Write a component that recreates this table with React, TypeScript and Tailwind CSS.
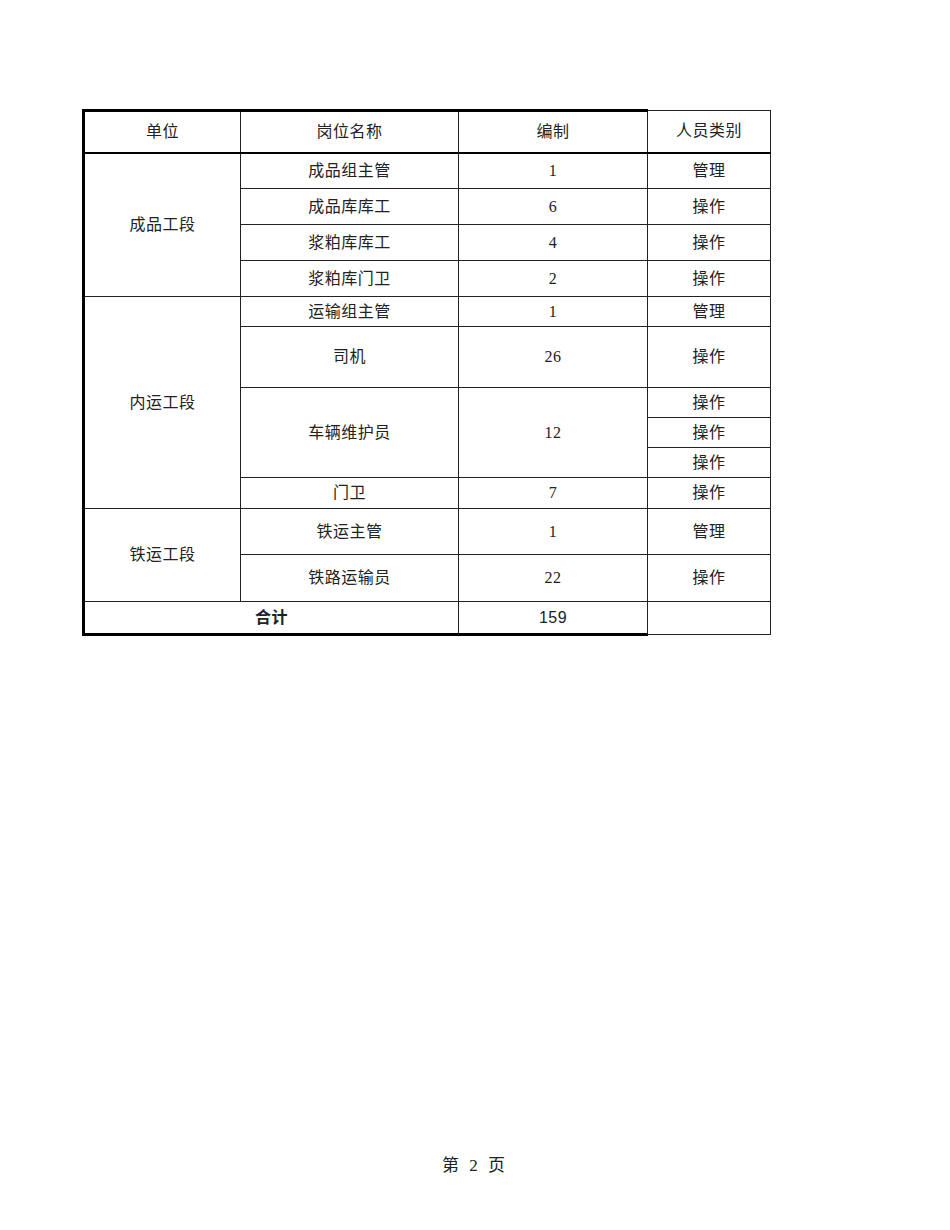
const serif = "font-['Liberation_Serif','Noto_Sans_CJK_SC',serif]"

type Row = {
  h: string
  unit?: { text: string; span: number }
  post?: { text: string; span?: number }
  count?: { text: string; span?: number }
  kind: string
}

const rows: Row[] = [
  { h: 'h-[36px]', unit: { text: '成品工段', span: 4 }, post: { text: '成品组主管' }, count: { text: '1' }, kind: '管理' },
  { h: 'h-[36px]', post: { text: '成品库库工' }, count: { text: '6' }, kind: '操作' },
  { h: 'h-[36px]', post: { text: '浆粕库库工' }, count: { text: '4' }, kind: '操作' },
  { h: 'h-[36px]', post: { text: '浆粕库门卫' }, count: { text: '2' }, kind: '操作' },
  { h: 'h-[30px]', unit: { text: '内运工段', span: 6 }, post: { text: '运输组主管' }, count: { text: '1' }, kind: '管理' },
  { h: 'h-[61px]', post: { text: '司机' }, count: { text: '26' }, kind: '操作' },
  { h: 'h-[30px]', post: { text: '车辆维护员', span: 3 }, count: { text: '12', span: 3 }, kind: '操作' },
  { h: 'h-[30px]', kind: '操作' },
  { h: 'h-[30px]', kind: '操作' },
  { h: 'h-[31px]', post: { text: '门卫' }, count: { text: '7' }, kind: '操作' },
  { h: 'h-[46px]', unit: { text: '铁运工段', span: 2 }, post: { text: '铁运主管' }, count: { text: '1' }, kind: '管理' },
  { h: 'h-[47px]', post: { text: '铁路运输员' }, count: { text: '22' }, kind: '操作' },
]

const cell = 'border border-[#222] text-center align-middle p-0'

export default function App() {
  return (
    <div className={`w-[950px] h-[1230px] bg-white flex flex-col text-[16px] text-[#222] ${serif}`}>
      <div className="pl-[82px] pt-[109px]">
        <table className="border-collapse table-fixed w-[687px] tracking-[0.5px]">
          <colgroup>
            <col className="w-[157px]" />
            <col className="w-[218px]" />
            <col className="w-[189px]" />
            <col className="w-[123px]" />
          </colgroup>
          <tbody>
            <tr className="h-[42px]">
              <td className={`${cell} border-l-[3px] border-t-[3px] border-b-2 border-l-black border-t-black border-b-black`}>单位</td>
              <td className={`${cell} border-t-[3px] border-b-2 border-t-black border-b-black`}>岗位名称</td>
              <td className={`${cell} border-t-[3px] border-b-2 border-t-black border-b-black`}>编制</td>
              <td className={`${cell} border-b-2 border-b-black`}>人员类别</td>
            </tr>
            {rows.map((r, i) => (
              <tr key={i} className={r.h}>
                {r.unit && (
                  <td rowSpan={r.unit.span} className={`${cell} border-l-[3px] border-l-black`}>
                    {r.unit.text}
                  </td>
                )}
                {r.post && (
                  <td rowSpan={r.post.span} className={cell}>
                    {r.post.text}
                  </td>
                )}
                {r.count && (
                  <td rowSpan={r.count.span} className={cell}>
                    {r.count.text}
                  </td>
                )}
                <td className={cell}>{r.kind}</td>
              </tr>
            ))}
            <tr className="h-[33px] font-['Liberation_Sans','Noto_Sans_CJK_SC',sans-serif]">
              <td colSpan={2} className={`${cell} border-l-[3px] border-b-[3px] border-l-black border-b-black font-bold`}>
                合计
              </td>
              <td className={`${cell} border-b-[3px] border-b-black`}>159</td>
              <td className={cell}></td>
            </tr>
          </tbody>
        </table>
      </div>

      <div className="flex-1" />

      <footer className="pb-[52px] text-center text-[17px] text-[#222] tracking-[3px]">
        第 2 页
      </footer>
    </div>
  )
}
